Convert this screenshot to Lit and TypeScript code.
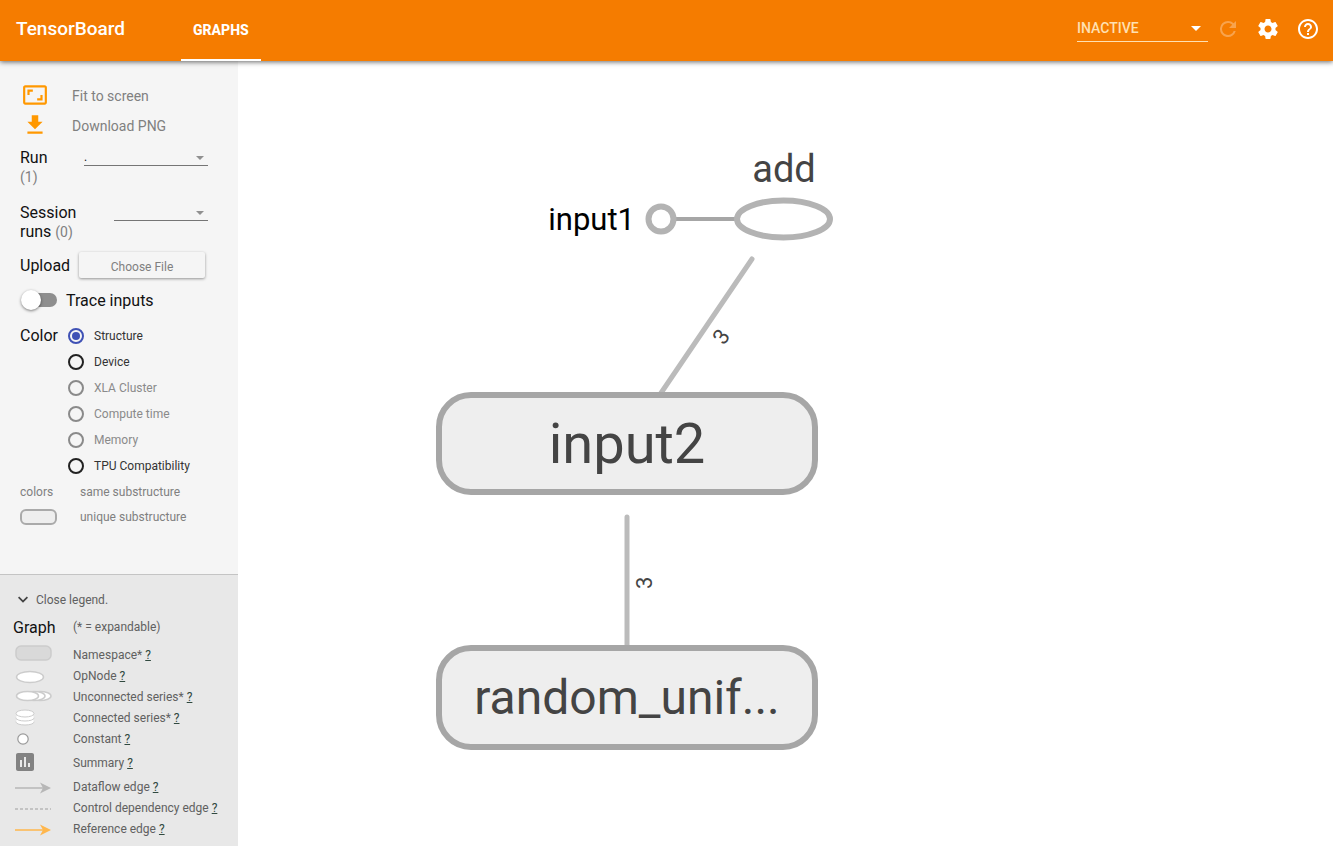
import { LitElement, html, svg, css } from "lit";
import { customElement, state } from "lit/decorators.js";

const colorModes = [
  { id: "structure", label: "Structure", disabled: false },
  { id: "device", label: "Device", disabled: false },
  { id: "xla", label: "XLA Cluster", disabled: true },
  { id: "compute", label: "Compute time", disabled: true },
  { id: "memory", label: "Memory", disabled: true },
  { id: "tpu", label: "TPU Compatibility", disabled: false },
];

const legendRows = [
  { label: "Namespace*", kind: "namespace" },
  { label: "OpNode", kind: "op" },
  { label: "Unconnected series*", kind: "unconnected" },
  { label: "Connected series*", kind: "connected" },
  { label: "Constant", kind: "constant" },
  { label: "Summary", kind: "summary" },
  { label: "Dataflow edge", kind: "dataflow" },
  { label: "Control dependency edge", kind: "control" },
  { label: "Reference edge", kind: "reference" },
];

const arrow = (color: string) => svg`
  <path d="M1 11h28" stroke=${color} stroke-width="1.5" />
  <path d="M26 5.5l11 5.5-11 5.5 3-5.5z" fill=${color} />`;

const legendIcons: Record<string, unknown> = {
  namespace: svg`<rect x="2" y="1" width="35" height="14" rx="5" fill="#d9d9d9" stroke="#ccc" stroke-width="1.5" />`,
  op: svg`<ellipse cx="16" cy="11" rx="13.5" ry="5.5" fill="#fff" stroke="#ccc" stroke-width="1.5" />`,
  unconnected: svg`<g fill="#fff" stroke="#ccc" stroke-width="1.5">
    <ellipse cx="26" cy="9" rx="11" ry="4.5" /><ellipse cx="20" cy="9" rx="11" ry="4.5" /><ellipse cx="13.5" cy="9" rx="11" ry="4.5" /></g>`,
  connected: svg`<g fill="#fff" stroke="#ccc">
    <ellipse cx="11" cy="14" rx="9" ry="3" /><ellipse cx="11" cy="13" rx="9" ry="3" stroke="none" />
    <ellipse cx="11" cy="10" rx="9" ry="3" /><ellipse cx="11" cy="9" rx="9" ry="3" stroke="none" />
    <ellipse cx="11" cy="5.5" rx="9" ry="3.5" /></g>`,
  constant: svg`<circle cx="9" cy="10" r="5.2" fill="#fff" stroke="#999" stroke-width="1.2" />`,
  summary: svg`<path transform="translate(-1 -3)" fill="#828282" d="M19 3H5c-1.1 0-2 .9-2 2v14c0 1.1.9 2 2 2h14c1.1 0 2-.9 2-2V5c0-1.1-.9-2-2-2zM9 17H7v-7h2v7zm4 0h-2V7h2v10zm4 0h-2v-4h2v4z" />`,
  dataflow: arrow("#b7b7b7"),
  control: svg`<path d="M1 11h36" stroke="#b7b7b7" stroke-width="1.5" stroke-dasharray="3 2" />`,
  reference: arrow("#ffb74d"),
};

@customElement("app-root")
export class AppRoot extends LitElement {
  @state() private mode = "structure";

  static styles = css`
    :host {
      display: flex;
      flex-direction: column;
      min-height: 100vh;
      font-family: Roboto, "Liberation Sans", sans-serif;
      font-size: 12px;
      color: #222;
      background: #fff;
    }
    * { box-sizing: border-box; }
    button, select, input { font: inherit; margin: 0; }
    button { background: none; border: 0; padding: 0; color: inherit; cursor: pointer; }
    svg { display: block; }

    .bar {
      display: flex;
      align-items: stretch;
      height: 61px;
      padding: 0 13px 0 16px;
      background: #f57c00;
      color: #fff;
      box-shadow: 0 1px 5px rgba(0, 0, 0, 0.6);
      z-index: 1;
    }
    .brand { width: 165px; margin: 0; padding-bottom: 3px; align-self: center; font-size: 19px; font-weight: 500; line-height: 24px; }
    .tab {
      display: flex;
      align-items: center;
      padding: 0 12px;
      border-bottom: 2px solid #fff;
      font-size: 14px;
      font-weight: 800;
      color: #fff;
      text-decoration: none;
    }
    .tools { display: flex; align-items: center; margin-left: auto; padding-bottom: 4px; gap: 16px; }
    .tools button { width: 24px; height: 24px; }
    .tools .reload { opacity: 0.3; }
    .inactive { width: 131px; height: 27px; margin-right: -8px; border-bottom: 1px solid #ffe0b2; color: #ffe0b2; font-size: 14px; font-weight: 500; }
    .inactive .arrow { border-top-color: #fff; margin-right: 7px; }

    .pick { display: grid; align-items: center; }
    .pick select {
      grid-area: 1 / 1;
      width: 100%;
      height: 100%;
      appearance: none;
      border: 0;
      padding: 0;
      background: none;
      color: inherit;
      outline: 0;
    }
    .arrow {
      grid-area: 1 / 1;
      justify-self: end;
      border: 5px solid transparent;
      border-top-color: #fff;
      border-bottom: 0;
      pointer-events: none;
    }

    .body { display: flex; flex: 1; }
    .side { display: flex; flex-direction: column; flex: none; width: 238px; background: #f5f5f5; }
    .controls { display: flex; flex-direction: column; padding: 20px 30px 24px 20px; }
    .action { display: flex; align-items: center; gap: 24px; height: 30px; padding-left: 2px; font-size: 14px; color: #808080; }
    .action svg { width: 26px; height: 26px; margin-bottom: 2px; fill: #ff9800; }

    .field { display: flex; justify-content: space-between; margin-top: 7px; font-size: 16px; line-height: 19px; color: #111; }
    .field + .field { margin-top: 16px; }
    .field label { width: 60px; }
    .field label span { display: block; }
    .field small { font-size: 14px; color: #808080; }
    .line { height: 18px; border-bottom: 1px solid #757575; font-size: 12px; }
    .line.wide { width: 124px; }
    .line.slim { width: 94px; }
    .line .arrow { border-width: 4px; border-bottom: 0; border-top-color: #909090; margin-right: 4px; }

    .upload { display: flex; align-items: center; gap: 9px; margin-top: 10px; font-size: 16px; color: #111; }
    .upload button {
      flex: 1;
      height: 26px;
      margin-right: 3px;
      padding-top: 4px;
      border-radius: 2px;
      box-shadow: 0 1px 3px rgba(0, 0, 0, 0.4);
      font-size: 12px;
      color: #808080;
    }
    .trace { display: flex; align-items: center; gap: 9px; height: 20px; margin-top: 12px; font-size: 16px; color: #111; }
    .trace input {
      appearance: none;
      display: flex;
      align-items: center;
      width: 34px;
      height: 14px;
      margin-left: 3px;
      border-radius: 7px;
      background: #8e8e8e;
    }
    .trace input::before {
      content: "";
      width: 20px;
      height: 20px;
      flex: none;
      margin-left: -2px;
      border-radius: 50%;
      background: #fff;
      box-shadow: 0 1px 3px rgba(0, 0, 0, 0.5);
    }
    .trace input:checked { justify-content: flex-end; background: #7986cb; }

    .color { display: flex; margin-top: 13px; line-height: 26px; }
    .color .title { width: 48px; font-size: 16px; color: #111; }
    .modes { display: flex; flex-direction: column; }
    .mode { display: flex; align-items: center; gap: 10px; height: 26px; color: #333; }
    .mode.off { color: #8a8a8a; }
    .mode input { appearance: none; width: 16px; height: 16px; padding: 2px; border: 2px solid #222; border-radius: 50%; background-clip: content-box; }
    .mode input:disabled { border-color: #8a8a8a; }
    .mode input:checked { border-color: #3f51b5; background-color: #3f51b5; }
    .key { display: grid; grid-template-columns: 60px 1fr; align-items: center; height: 25px; color: #808080; }
    .unique { width: 37px; height: 16px; border: 2px solid #aaa; border-radius: 6px; background: #eee; }

    .legend { margin-top: auto; padding: 14px 10px 7px 13px; border-top: 1px solid #c4c4c4; background: #e8e8e8; color: #606060; }
    .toggle { display: flex; align-items: center; gap: 3px; height: 21px; }
    .row { display: grid; grid-template-columns: 60px 1fr; align-items: center; height: 21px; }
    .row.head { height: 34px; }
    .row.summary { height: 27px; }
    .row h2 { margin: 0; font-size: 16px; font-weight: 400; color: #111; }
    .row svg { margin-left: 1px; }
    .row a { color: #30493f; }

    .graph { flex: 1; min-width: 0; display: flex; }
    .graph svg { width: 100%; height: calc(100vh - 61px); }
    .graph .label { fill: #444; }
    .graph .edge { stroke: #bbb; stroke-width: 5; stroke-linecap: round; }
    .graph .box { fill: #eee; stroke: #a6a6a6; stroke-width: 6; }
  `;

  private renderBar() {
    return html`
      <header class="bar">
        <h1 class="brand">TensorBoard</h1>
        <a class="tab" href="#graphs">GRAPHS</a>
        <div class="tools">
          <div class="pick inactive">
            <select aria-label="Inactive dashboards"><option>INACTIVE</option></select>
            <span class="arrow"></span>
          </div>
          <button class="reload" aria-label="Reload" disabled>
            <svg width="24" height="24" viewBox="0 0 24 24" fill="#fff"><path d="M17.65 6.35A7.96 7.96 0 0 0 12 4a8 8 0 1 0 7.73 10h-2.08A6 6 0 1 1 12 6c1.66 0 3.14.69 4.22 1.78L13 11h7V4z" /></svg>
          </button>
          <button aria-label="Settings">
            <svg width="24" height="24" viewBox="0 0 24 24" fill="#fff"><path d="M19.43 12.98c.04-.32.07-.64.07-.98s-.03-.66-.07-.98l2.11-1.65c.19-.15.24-.42.12-.64l-2-3.46c-.12-.22-.39-.3-.61-.22l-2.49 1c-.52-.4-1.08-.73-1.69-.98l-.38-2.65A.488.488 0 0 0 14 2h-4c-.25 0-.46.18-.49.42l-.38 2.65c-.61.25-1.17.59-1.69.98l-2.49-1c-.23-.09-.49 0-.61.22l-2 3.46c-.13.22-.07.49.12.64l2.11 1.65c-.04.32-.07.65-.07.98s.03.66.07.98l-2.11 1.65c-.19.15-.24.42-.12.64l2 3.46c.12.22.39.3.61.22l2.49-1c.52.4 1.08.73 1.69.98l.38 2.65c.03.24.24.42.49.42h4c.25 0 .46-.18.49-.42l.38-2.65c.61-.25 1.17-.59 1.69-.98l2.49 1c.23.09.49 0 .61-.22l2-3.46c.12-.22.07-.49-.12-.64l-2.11-1.65zM12 15.5c-1.93 0-3.5-1.57-3.5-3.5s1.57-3.5 3.5-3.5 3.5 1.57 3.5 3.5-1.57 3.5-3.5 3.5z" /></svg>
          </button>
          <button aria-label="Help">
            <svg width="24" height="24" viewBox="0 0 24 24" fill="#fff"><path d="M11 18h2v-2h-2v2zm1-16C6.48 2 2 6.48 2 12s4.48 10 10 10 10-4.48 10-10S17.52 2 12 2zm0 18c-4.41 0-8-3.59-8-8s3.59-8 8-8 8 3.59 8 8-3.59 8-8 8zm0-14c-2.21 0-4 1.79-4 4h2c0-1.1.9-2 2-2s2 .9 2 2c0 2-3 1.75-3 5h2c0-2.25 3-2.5 3-5 0-2.21-1.79-4-4-4z" /></svg>
          </button>
        </div>
      </header>`;
  }

  private renderControls() {
    return html`
      <div class="controls">
        <button class="action">
          <svg viewBox="0 0 24 24"><path d="M19 12h-2v3h-3v2h5v-5zM7 9h3V7H5v5h2V9zm14-6H3c-1.1 0-2 .9-2 2v14c0 1.1.9 2 2 2h18c1.1 0 2-.9 2-2V5c0-1.1-.9-2-2-2zm0 16.01H3V4.99h18v14.02z" /></svg>
          <span>Fit to screen</span>
        </button>
        <button class="action">
          <svg viewBox="0 0 24 24"><path d="M19 9h-4V3H9v6H5l7 7 7-7zM5 18v2h14v-2H5z" /></svg>
          <span>Download PNG</span>
        </button>
        <div class="field">
          <label for="run"><span>Run</span><span><small>(1)</small></span></label>
          <div class="pick line wide"><select id="run"><option>.</option></select><span class="arrow"></span></div>
        </div>
        <div class="field">
          <label for="session"><span>Session</span><span>runs <small>(0)</small></span></label>
          <div class="pick line slim"><select id="session"></select><span class="arrow"></span></div>
        </div>
        <div class="upload"><span>Upload</span><button>Choose File</button></div>
        <label class="trace"><input type="checkbox" role="switch" />Trace inputs</label>
        <div class="color" role="radiogroup" aria-labelledby="color-title">
          <span class="title" id="color-title">Color</span>
          <div class="modes">
            ${colorModes.map((m) => html`
              <label class="mode ${m.disabled ? "off" : ""}">
                <input type="radio" name="color" .checked=${this.mode === m.id} ?disabled=${m.disabled} @change=${() => (this.mode = m.id)} />
                ${m.label}
              </label>`)}
          </div>
        </div>
        <div class="key"><span>colors</span><span>same substructure</span></div>
        <div class="key"><span class="unique"></span><span>unique substructure</span></div>
      </div>`;
  }

  private renderLegend() {
    return html`
      <section class="legend">
        <button class="toggle">
          <svg width="20" height="20" viewBox="0 0 24 24" fill="#444"><path d="M7.41 7.84L12 12.42l4.59-4.58L18 9.25l-6 6-6-6z" /></svg>
          Close legend.
        </button>
        <div class="row head"><h2>Graph</h2><span>(* = expandable)</span></div>
        ${legendRows.map((r) => html`
          <div class="row ${r.kind}">
            <svg width="40" height="20" viewBox="0 0 40 20" fill="none">${legendIcons[r.kind]}</svg>
            <span>${r.label} <a href="#${r.kind}">?</a></span>
          </div>`)}
      </section>`;
  }

  private renderGraph() {
    return html`
      <main class="graph">
        <svg viewBox="0 0 1095 785" role="img" aria-label="Computation graph">
          <path class="edge" d="M514 198L423 332" />
          <path class="edge" d="M389 456V586" />
          <path d="M437 158H500" stroke="#a6a6a6" stroke-width="4" />
          <circle cx="423" cy="158" r="12.5" fill="#fff" stroke="#b3b3b3" stroke-width="6" />
          <ellipse cx="545.5" cy="158" rx="46.5" ry="18.5" fill="#fff" stroke="#b3b3b3" stroke-width="6" />
          <rect class="box" x="201" y="334" width="376" height="97" rx="32" />
          <rect class="box" x="201" y="587" width="376" height="99" rx="32" />
          <text class="label" x="546" y="121" font-size="38" text-anchor="middle">add</text>
          <text x="397" y="169" font-size="31" text-anchor="end" fill="#000">input1</text>
          <text class="label" x="389" y="402" font-size="56" text-anchor="middle">input2</text>
          <text class="label" x="389" y="653" font-size="48" text-anchor="middle">random_unif...</text>
          <text class="label" transform="translate(486 285) rotate(-56)" font-size="22">3</text>
          <text class="label" transform="translate(414 528) rotate(-90)" font-size="22">3</text>
        </svg>
      </main>`;
  }

  render() {
    return html`
      ${this.renderBar()}
      <div class="body">
        <aside class="side">${this.renderControls()}${this.renderLegend()}</aside>
        ${this.renderGraph()}
      </div>`;
  }
}
